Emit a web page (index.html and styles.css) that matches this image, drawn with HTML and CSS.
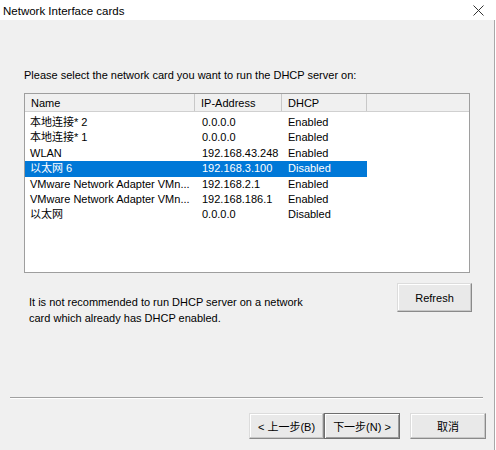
FILE: index.html
```html
<!DOCTYPE html>
<html>
<head>
<meta charset="utf-8">
<link rel="stylesheet" href="styles.css">
</head>
<body>
<div class="window">
  <div class="titlebar">
    <span class="title">Network Interface cards</span>
    <svg class="close" width="11" height="11" viewBox="0 0 11 11"><path d="M0.5 0.5 L10.5 10.5 M10.5 0.5 L0.5 10.5" stroke="#333" stroke-width="1" fill="none"/></svg>
  </div>
  <div class="content">
    <p class="prompt">Please select the network card you want to run the DHCP server on:</p>
    <div class="list">
      <div class="header">
        <div class="col c1">Name</div>
        <div class="col c2">IP-Address</div>
        <div class="col c3">DHCP</div>
        <div class="col c4"></div>
      </div>
      <div class="rows">
        <div class="row"><div class="cell c1">本地连接* 2</div><div class="cell c2">0.0.0.0</div><div class="cell c3">Enabled</div></div>
        <div class="row"><div class="cell c1">本地连接* 1</div><div class="cell c2">0.0.0.0</div><div class="cell c3">Enabled</div></div>
        <div class="row"><div class="cell c1">WLAN</div><div class="cell c2">192.168.43.248</div><div class="cell c3">Enabled</div></div>
        <div class="row selected"><div class="cell c1">以太网 6</div><div class="cell c2">192.168.3.100</div><div class="cell c3">Disabled</div></div>
        <div class="row"><div class="cell c1">VMware Network Adapter VMn...</div><div class="cell c2">192.168.2.1</div><div class="cell c3">Enabled</div></div>
        <div class="row"><div class="cell c1">VMware Network Adapter VMn...</div><div class="cell c2">192.168.186.1</div><div class="cell c3">Enabled</div></div>
        <div class="row"><div class="cell c1">以太网</div><div class="cell c2">0.0.0.0</div><div class="cell c3">Disabled</div></div>
      </div>
    </div>
    <div class="lower">
      <p class="note">It is not recommended to run DHCP server on a network<br>card which already has DHCP enabled.</p>
      <button class="btn refresh">Refresh</button>
    </div>
    <div class="separator"></div>
    <div class="footer">
      <button class="btn back">&lt; 上一步(B)</button>
      <button class="btn next">下一步(N) &gt;</button>
      <button class="btn cancel">取消</button>
    </div>
  </div>
</div>
</body>
</html>
```
FILE: styles.css
```css
* { box-sizing: border-box; }
html, body { margin: 0; padding: 0; background: #ffffff; }
body {
  font-family: "Liberation Sans", "Noto Sans CJK SC", sans-serif;
  font-size: 11px;
  color: #000;
}
.window {
  width: 496px;
  height: 450px;
  display: flex;
  flex-direction: column;
}
.titlebar {
  height: 20px;
  background: #fff;
  display: flex;
  align-items: center;
  justify-content: space-between;
  padding: 1px 12px 0 3px;
}
.title { font-size: 11.5px; color: #000; }
.close { display: block; }
.content {
  flex: 1;
  width: 495px;
  background: #f0f0f0;
  border-right: 1px solid #a8a8a8;
  display: flex;
  flex-direction: column;
}
.prompt {
  margin: 47px 0 0 24px;
  line-height: 16px;
  height: 16px;
}
.list {
  margin: 10px 0 0 24px;
  width: 446px;
  height: 180px;
  background: #fff;
  border: 1px solid #9e9e9e;
}
.header {
  display: flex;
  height: 18px;
  background: #f0f0f0;
  border-bottom: 1px solid #d0d0d0;
}
.col {
  height: 17px;
  line-height: 18px;
  padding-left: 6px;
  border-right: 1px solid #c8c8c8;
}
.col.c4 { border-right: none; flex: 1; }
.c1 { width: 170px; }
.c2 { width: 87px; }
.c3 { width: 85px; }
.rows { padding-top: 3px; }
.row {
  display: flex;
  height: 15.4px;
  line-height: 15.4px;
}
.cell { padding-left: 5px; white-space: nowrap; overflow: hidden; }
.cell.c2 { padding-left: 7px; }
.cell.c3 { padding-left: 6px; }
.row.selected .cell { background: #0078d7; color: #fff; }
.lower {
  display: flex;
  justify-content: space-between;
  align-items: flex-start;
  margin-top: 10px;
  padding: 0 22px 0 29px;
}
.note {
  margin: 11px 0 0 0;
  line-height: 16px;
}
.btn {
  font-family: "Liberation Sans", "Noto Sans CJK SC", sans-serif;
  font-size: 11px;
  color: #000;
  background: #e9e9e9;
  border: 1px solid;
  border-color: #dcdcdc #8a8a8a #8a8a8a #dcdcdc;
  box-shadow: inset -1px -1px 0 #c8c8c8, inset 1px 1px 0 #ffffff;
  padding: 0;
  margin: 0;
}
.refresh { width: 75px; height: 29px; }
.separator {
  margin: 71px 11px 0 10px;
  height: 2px;
  border-top: 1px solid #a0a0a0;
  border-bottom: 1px solid #ffffff;
}
.footer {
  display: flex;
  justify-content: flex-end;
  margin-top: 14px;
  padding-right: 8px;
}
.footer .btn { height: 26px; }
.back { width: 75px; }
.next {
  width: 76px;
  border: 1px solid #6e6e6e;
  box-shadow: inset 1px 1px 0 #ffffff, inset -1px -1px 0 #9a9a9a;
}
.cancel { width: 76px; margin-left: 10px; }
```
